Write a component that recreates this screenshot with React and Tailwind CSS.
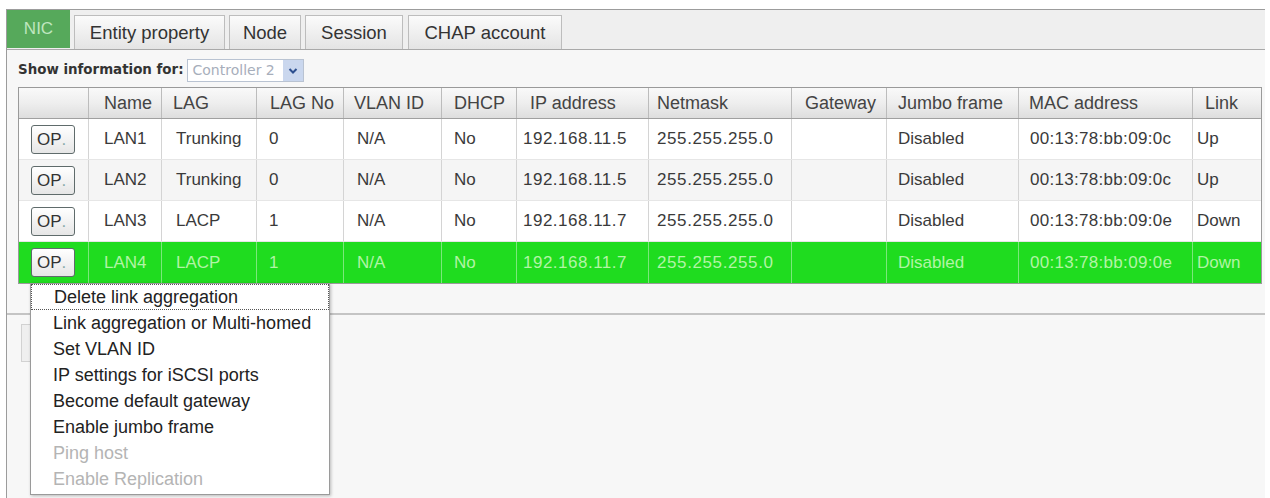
import React from "react";

const rows = [
  { name: "LAN1", lag: "Trunking", no: "0", vlan: "N/A", dhcp: "No", ip: "192.168.11.5", mask: "255.255.255.0", gw: "", jumbo: "Disabled", mac: "00:13:78:bb:09:0c", link: "Up" },
  { name: "LAN2", lag: "Trunking", no: "0", vlan: "N/A", dhcp: "No", ip: "192.168.11.5", mask: "255.255.255.0", gw: "", jumbo: "Disabled", mac: "00:13:78:bb:09:0c", link: "Up" },
  { name: "LAN3", lag: "LACP", no: "1", vlan: "N/A", dhcp: "No", ip: "192.168.11.7", mask: "255.255.255.0", gw: "", jumbo: "Disabled", mac: "00:13:78:bb:09:0e", link: "Down" },
  { name: "LAN4", lag: "LACP", no: "1", vlan: "N/A", dhcp: "No", ip: "192.168.11.7", mask: "255.255.255.0", gw: "", jumbo: "Disabled", mac: "00:13:78:bb:09:0e", link: "Down" },
];

const gridCols =
  "grid grid-cols-[69px_73px_95px_87px_98px_75px_132px_143px_95px_132px_174px_1fr]";

function Tab({ children, w }) {
  return (
    <div
      className={`${w} h-[34px] flex items-center justify-center border border-b-0 border-[#bdbdbd] bg-gradient-to-b from-[#fbfbfb] to-[#e4e4e4] text-[18.5px] text-[#333]`}
    >
      {children}
    </div>
  );
}

function OpButton() {
  return (
    <div className="w-[44px] h-[29px] border border-[#5f6b6b] rounded-[3px] bg-gradient-to-b from-[#ffffff] to-[#e6e6e6] flex items-center pl-[5px] text-[17px] text-[#333] leading-none">
      OP<span className="text-[#8aa]">.</span>
    </div>
  );
}

function Row({ r, idx }) {
  const green = idx === 3;
  const bg = green ? "bg-[#1fdc1f]" : idx === 1 ? "bg-[#f5f5f5]" : "bg-white";
  const txt = green ? "text-[#b2f4a6]" : "text-[#3a3a3a]";
  const sep = green ? "border-l border-[#7be87b]" : "border-l border-[#d4d4d4]";
  const line = green ? "" : "border-b border-[#e6e6e6]";
  const c = `${sep} flex items-center h-full`;
  return (
    <div className={`${gridCols} h-[41px] ${bg} ${txt} ${line} text-[17px]`}>
      <div className="flex items-center h-full pl-[12px]">
        <OpButton />
      </div>
      <div className={`${c} pl-[15px]`}>{r.name}</div>
      <div className={`${c} pl-[14px]`}>{r.lag}</div>
      <div className={`${c} pl-[12px]`}>{r.no}</div>
      <div className={`${c} pl-[13px]`}>{r.vlan}</div>
      <div className={`${c} pl-[12px]`}>{r.dhcp}</div>
      <div className={`${c} pl-[6px] tracking-[0.5px]`}>{r.ip}</div>
      <div className={`${c} pl-[8px] tracking-[0.6px]`}>{r.mask}</div>
      <div className={`${c}`}>{r.gw}</div>
      <div className={`${c} pl-[11px]`}>{r.jumbo}</div>
      <div className={`${c} pl-[11px] tracking-[0.3px]`}>{r.mac}</div>
      <div className={`${c} pl-[4px]`}>{r.link}</div>
    </div>
  );
}

const menuItems = [
  { t: "Delete link aggregation", focus: true },
  { t: "Link aggregation or Multi-homed" },
  { t: "Set VLAN ID" },
  { t: "IP settings for iSCSI ports" },
  { t: "Become default gateway" },
  { t: "Enable jumbo frame" },
  { t: "Ping host", disabled: true },
  { t: "Enable Replication", disabled: true },
];

export default function App() {
  const headers = [
    ["", ""],
    ["Name", "pl-[15px]"],
    ["LAG", "pl-[11px]"],
    ["LAG No", "pl-[13px]"],
    ["VLAN ID", "pl-[10px]"],
    ["DHCP", "pl-[12px]"],
    ["IP address", "pl-[13px]"],
    ["Netmask", "pl-[8px]"],
    ["Gateway", "pl-[13px]"],
    ["Jumbo frame", "pl-[11px]"],
    ["MAC address", "pl-[10px]"],
    ["Link", "pl-[12px]"],
  ];
  return (
    <div className="w-[1270px] h-[498px] bg-white relative overflow-hidden pl-[6px] pr-[5px] pt-[9px] font-['Liberation_Sans',Arial,sans-serif]">
      <div className="h-full border-l border-t border-[#9c9c9c] bg-[#f7f7f7] flex flex-col">
        {/* Tab bar */}
        <div className="h-[40px] shrink-0 bg-[#efefef] border-b border-[#a9a9a9] flex items-end">
          <div className="w-[63px] h-[38px] mb-[1px] bg-[#56a95b] flex items-center justify-center text-[17px] text-[#bfe6bf]">
            NIC
          </div>
          <div className="flex items-end gap-[4px] ml-[4px]">
            <Tab w="w-[151px]">Entity property</Tab>
            <Tab w="w-[72px]">Node</Tab>
            <Tab w="w-[98px]">Session</Tab>
            <Tab w="w-[154px] ml-[1px]">CHAP account</Tab>
          </div>
        </div>

        {/* Show info row */}
        <div className="flex items-center mt-[9px] pl-[11px] h-[23px]">
          <span className="font-['DejaVu_Sans',Verdana,sans-serif] font-bold text-[13.4px] text-[#333]">
            Show information for:
          </span>
          <div className="ml-[3px] w-[117px] h-[23px] border border-[#b9c3d2] bg-white flex items-center justify-between">
            <span className="pl-[5px] font-['DejaVu_Sans',Verdana,sans-serif] text-[14px] text-[#a7aebb]">
              Controller 2
            </span>
            <div className="w-[20px] h-full bg-[#cad7ee] flex items-center justify-center">
              <svg width="10" height="8" viewBox="0 0 10 8">
                <path d="M1.5 2 L5 5.5 L8.5 2" stroke="#2c4f8f" strokeWidth="2" fill="none" />
              </svg>
            </div>
          </div>
        </div>

        {/* Table */}
        <div className="ml-[11px] mt-[5px] w-[1244px] border border-[#9a9a9a] bg-white">
          <div
            className={`${gridCols} h-[31px] bg-gradient-to-b from-[#f9f9f9] via-[#eeeeee] to-[#dedede] border-b border-[#a0a0a0] text-[18px] text-[#444]`}
          >
            {headers.map(([h, p], i) => (
              <div
                key={i}
                className={`flex items-center h-full ${p} ${i > 0 ? "border-l border-[#bcbcbc]" : ""}`}
              >
                {h}
              </div>
            ))}
          </div>
          {rows.map((r, i) => (
            <Row key={i} r={r} idx={i} />
          ))}
        </div>

        {/* Lower section */}
        <div className="mt-[29px] border-t-2 border-[#c4c4c4] flex-1">
          <div className="ml-[14px] mt-[9px] w-[90px] h-[38px] border border-[#d2d2d2] bg-[#efefef]"></div>
        </div>
      </div>

      {/* Context menu */}
      <div className="absolute left-[30px] top-[283px] w-[300px] h-[212px] bg-white border border-[#9a9a9a] shadow-[1px_1px_3px_rgba(0,0,0,0.25)] flex flex-col text-[18px] leading-none">
        {menuItems.map((m, i) => (
          <div
            key={i}
            className={`h-[26px] shrink-0 flex items-center pl-[22px] ${
              m.focus ? "border border-dotted border-[#555]" : ""
            } ${m.disabled ? "text-[#b4b4b4]" : "text-[#222]"}`}
          >
            {m.t}
          </div>
        ))}
      </div>
    </div>
  );
}
